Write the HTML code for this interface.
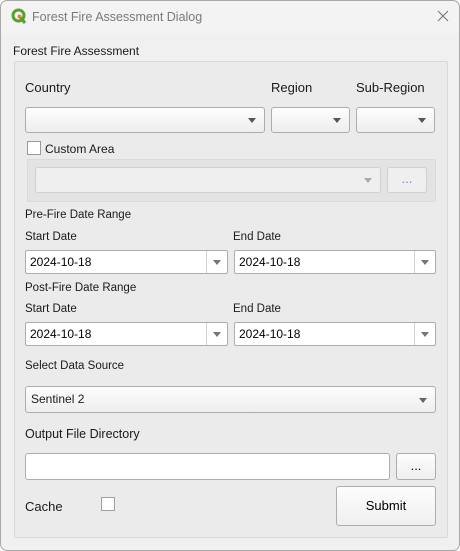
<!DOCTYPE html>
<html><head><style>
*{box-sizing:border-box;margin:0;padding:0}
body{width:460px;height:551px;background:#fff;font-family:"Liberation Sans",sans-serif;position:relative;overflow:hidden}
.win{position:absolute;left:0;top:0;width:460px;height:551px;background:#f0f0f0;border-radius:7px;overflow:hidden}
.in{position:absolute;left:1px;top:0;width:460px;height:551px}
.frame{position:absolute;left:0;top:0;width:460px;height:551px;border:1px solid #a8a8a8;border-radius:7px;z-index:9}
.a{position:absolute}
.t{position:absolute;white-space:nowrap;color:#1a1a1a}
.combo{position:absolute;border:1px solid #adadad;border-radius:3px;background:linear-gradient(#fdfdfd,#eeeeee)}
.arrow{position:absolute;right:8px;top:50%;margin-top:-2px;width:0;height:0;border-left:4px solid transparent;border-right:4px solid transparent;border-top:5px solid #555}
.date{position:absolute;border:1px solid #adadad;border-radius:2px;background:#fff;height:24px;font-size:12px;line-height:22px;padding-left:4px}
.date .sep{position:absolute;right:0;top:0;bottom:0;width:21px;border-left:1px solid #d0d0d0}
.date .arrow{right:6px;border-top-color:#777}
.btn{position:absolute;border:1px solid #adadad;border-radius:3px;background:linear-gradient(#fdfdfd,#efefef);text-align:center;font-size:13px}
.cb{position:absolute;width:14px;height:14px;border:1px solid #8f8f8f;background:#fff}
</style></head><body>
<div class="win">
<div class="a" style="left:0;top:0;width:460px;height:33px;background:#f3f3f3"></div>
<div class="in">
<svg class="a" style="left:10px;top:8px" width="16" height="17" viewBox="0 0 16 17"><circle cx="7.5" cy="7.5" r="5.5" fill="none" stroke="#5a9e2e" stroke-width="3"/><path d="M9 9 L14 15" stroke="#5a9e2e" stroke-width="3"/><circle cx="8.5" cy="8.5" r="2" fill="#e8842a"/></svg>
<div class="t" style="left:31px;top:10px;font-size:12.5px;color:#7a7a7a">Forest Fire Assessment Dialog</div>
<svg class="a" style="left:436px;top:10px" width="12" height="12"><path d="M1 1L11 11M11 1L1 11" stroke="#777" stroke-width="1.1"/></svg>
<div class="t" style="left:12px;top:44px;font-size:12px">Forest Fire Assessment</div>
<div class="a" style="left:13px;top:61px;width:434px;height:477px;border:1px solid #d8d8d8;border-radius:2px;background:#ebebeb"></div>

<div class="t" style="left:24px;top:80px;font-size:13px">Country</div>
<div class="t" style="left:270px;top:80px;font-size:13px">Region</div>
<div class="t" style="left:355px;top:80px;font-size:13px">Sub-Region</div>
<div class="combo" style="left:24px;top:107px;width:240px;height:26px"><div class="arrow"></div></div>
<div class="combo" style="left:270px;top:107px;width:79px;height:26px"><div class="arrow"></div></div>
<div class="combo" style="left:355px;top:107px;width:79px;height:26px"><div class="arrow"></div></div>

<div class="cb" style="left:26px;top:141px;border-color:#999"></div>
<div class="t" style="left:44px;top:142px;font-size:12px">Custom Area</div>
<div class="a" style="left:26px;top:159px;width:409px;height:43px;background:#e3e3e3;border:1px solid #dadada;border-radius:2px"></div>
<div class="combo" style="left:34px;top:167px;width:346px;height:26px;border-color:#cfcfcf;background:#efefef"><div class="arrow" style="border-top-color:#aaa"></div></div>
<div class="btn" style="left:386px;top:167px;width:40px;height:26px;border-color:#cfcfcf;background:#efefef;color:#6a8cc0;line-height:22px">...</div>

<div class="t" style="left:24px;top:209px;font-size:11.5px">Pre-Fire Date Range</div>
<div class="t" style="left:24px;top:231px;font-size:11.5px">Start Date</div>
<div class="t" style="left:232px;top:231px;font-size:11.5px">End Date</div>
<div class="date" style="left:24px;top:250px;width:203px">2024-10-18<div class="sep"><div class="arrow"></div></div></div>
<div class="date" style="left:233px;top:250px;width:202px">2024-10-18<div class="sep"><div class="arrow"></div></div></div>

<div class="t" style="left:24px;top:282px;font-size:11.5px">Post-Fire Date Range</div>
<div class="t" style="left:24px;top:303px;font-size:11.5px">Start Date</div>
<div class="t" style="left:232px;top:303px;font-size:11.5px">End Date</div>
<div class="date" style="left:24px;top:322px;width:203px">2024-10-18<div class="sep"><div class="arrow"></div></div></div>
<div class="date" style="left:233px;top:322px;width:202px">2024-10-18<div class="sep"><div class="arrow"></div></div></div>

<div class="t" style="left:24px;top:360px;font-size:11.5px">Select Data Source</div>
<div class="combo" style="left:24px;top:386px;width:411px;height:27px;font-size:12px;line-height:25px;padding-left:5px;color:#1a1a1a">Sentinel 2<div class="arrow" style="border-top-color:#666"></div></div>

<div class="t" style="left:24px;top:427px;font-size:12.5px">Output File Directory</div>
<div class="a" style="left:24px;top:453px;width:365px;height:27px;background:#fff;border:1px solid #adadad;border-radius:3px"></div>
<div class="btn" style="left:395px;top:453px;width:40px;height:27px;line-height:24px">...</div>

<div class="t" style="left:24px;top:499px;font-size:13px">Cache</div>
<div class="cb" style="left:100px;top:497px;border-color:#a0a0a0"></div>
<div class="btn" style="left:335px;top:486px;width:100px;height:40px;line-height:38px">Submit</div>
</div>
</div>
<div class="frame"></div>
</body></html>
